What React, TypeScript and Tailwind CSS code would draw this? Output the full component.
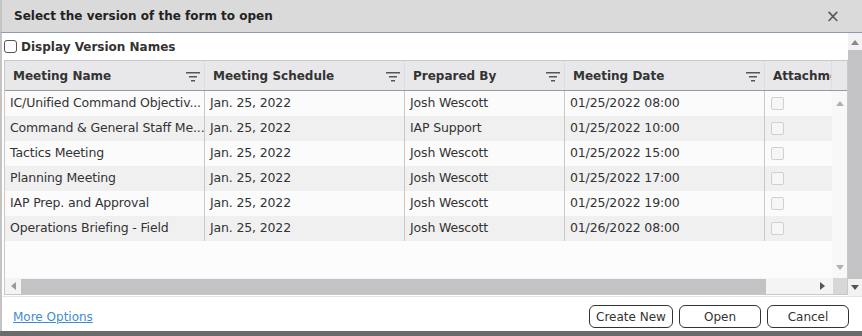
import React from "react";

const rows = [
  ["IC/Unified Command Objectiv...", "Jan. 25, 2022", "Josh Wescott", "01/25/2022 08:00"],
  ["Command & General Staff Me...", "Jan. 25, 2022", "IAP Support", "01/25/2022 10:00"],
  ["Tactics Meeting", "Jan. 25, 2022", "Josh Wescott", "01/25/2022 15:00"],
  ["Planning Meeting", "Jan. 25, 2022", "Josh Wescott", "01/25/2022 17:00"],
  ["IAP Prep. and Approval", "Jan. 25, 2022", "Josh Wescott", "01/25/2022 19:00"],
  ["Operations Briefing - Field", "Jan. 25, 2022", "Josh Wescott", "01/26/2022 08:00"],
];

const columns = [
  { label: "Meeting Name", w: "w-[200px]" },
  { label: "Meeting Schedule", w: "w-[200px]" },
  { label: "Prepared By", w: "w-[160px]" },
  { label: "Meeting Date", w: "w-[200px]" },
];

function FilterIcon() {
  return (
    <svg width="14" height="12" viewBox="0 0 14 12" className="shrink-0">
      <rect x="0" y="2" width="14" height="1.5" fill="#555" />
      <rect x="3" y="6" width="8" height="1.5" fill="#555" />
      <rect x="5" y="10" width="4" height="1.5" fill="#555" />
    </svg>
  );
}

function Arrow({ dir, color = "#999" }: { dir: "up" | "down" | "left" | "right"; color?: string }) {
  const pts = {
    up: "0,5 4,0 8,5",
    down: "0,0 4,5 8,0",
    left: "5,0 0,4 5,8",
    right: "0,0 5,4 0,8",
  }[dir];
  const vert = dir === "up" || dir === "down";
  return (
    <svg width={vert ? 8 : 5} height={vert ? 5 : 8} viewBox={vert ? "0 0 8 5" : "0 0 5 8"}>
      <polygon points={pts} fill={color} />
    </svg>
  );
}

export default function App() {
  return (
    <div
      className="w-[862px] h-[336px] flex flex-col bg-white text-[#333] overflow-hidden"
      style={{ fontFamily: "'DejaVu Sans', Verdana, sans-serif" }}
    >
      {/* title bar */}
      <div className="h-[33px] shrink-0 flex items-center justify-between bg-[#dadada] border-b border-[#8e9aae] border-l-2 border-l-[#c4c4c4] pl-[12px] pr-[22px]">
        <span className="text-[12px] font-bold text-[#222]">Select the version of the form to open</span>
        <span className="text-[17px] leading-none text-[#555]">×</span>
      </div>

      {/* body */}
      <div className="flex-1 flex flex-col border-l-2 border-[#c4c4c4]">
        <div className="flex h-[263px] shrink-0">
          <div className="flex-1 flex flex-col pl-[2px]">
            <label className="h-[27px] flex items-center gap-[4px] text-[12px] font-bold text-[#333]">
              <span className="w-[13px] h-[13px] border border-[#555] rounded-[3px] bg-white" />
              Display Version Names
            </label>
            {/* grid */}
            <div className="flex-1 flex flex-col border border-[#c8c8c8] bg-[#fcfcfc] mb-[1px]">
              <div className="h-[30px] flex bg-[#e8e8ea] border-b border-[#9a9a9a] overflow-hidden">
                {columns.map((c) => (
                  <div
                    key={c.label}
                    className={`${c.w} shrink-0 flex items-center justify-between pl-[8px] pr-[4px] border-r border-dotted border-[#d4d4d4] text-[12px] font-bold text-[#333]`}
                  >
                    <span>{c.label}</span>
                    <FilterIcon />
                  </div>
                ))}
                <div className="w-[67px] shrink-0 flex items-center pl-[8px] overflow-hidden whitespace-nowrap text-[12px] font-bold text-[#333] border-r border-dotted border-[#d4d4d4]">
                  Attachments
                </div>
              </div>
              <div className="flex-1 flex min-h-0">
                <div className="flex-1 overflow-hidden">
                  {rows.map((r, i) => (
                    <div key={i} className={`h-[25px] flex ${i % 2 === 0 ? "bg-[#fbfbfc]" : "bg-[#f0f0f1]"}`}>
                      {r.map((cell, j) => (
                        <div
                          key={j}
                          className={`${columns[j].w} shrink-0 flex items-center pl-[5px] border-r border-[#c8c8c8] text-[12.5px] tracking-[-0.15px] text-[#333] whitespace-nowrap overflow-hidden`}
                        >
                          {cell}
                        </div>
                      ))}
                      <div className="w-[67px] shrink-0 flex items-center pl-[6px]">
                        <span className="w-[13px] h-[13px] border border-[#d0d0d0] rounded-[2px] bg-[#f6f6f6]" />
                      </div>
                    </div>
                  ))}
                </div>
                <div className="w-[15px] shrink-0 flex flex-col items-center justify-between pt-[10px] pb-[8px] bg-[#f8f8f8]">
                  <Arrow dir="up" color="#b0b0b0" />
                  <Arrow dir="down" color="#b0b0b0" />
                </div>
              </div>
              <div className="h-[16px] shrink-0 flex items-center bg-[#f4f4f4]">
                <div className="w-[16px] flex justify-center">
                  <Arrow dir="left" color="#999" />
                </div>
                <div className="w-[745px] h-[15px] bg-[#c3c2c5]" />
                <div className="flex-1 flex justify-end pr-[8px]">
                  <Arrow dir="right" color="#555" />
                </div>
                <div className="w-[14px] h-[16px] bg-[#d6d8d6]" />
              </div>
            </div>
          </div>
          {/* outer scrollbar */}
          <div className="w-[14px] shrink-0 flex flex-col items-center bg-[#f2f2f2] pt-[7px] pb-[6px]">
            <Arrow dir="up" color="#888" />
            <div className="w-full flex-1 bg-[#c3c2c5] mt-[5px] mb-[6px]" />
            <Arrow dir="down" color="#555" />
          </div>
        </div>

        {/* footer */}
        <div className="flex-1 flex items-start justify-between pt-[8px] pl-[11px] pr-[13px] border-t border-[#e4e4e4]">
          <a className="mt-[3px] text-[12px] text-[#3f8bd6] underline">More Options</a>
          <div className="flex gap-[6px]">
            <button className="w-[84px] h-[23px] border border-[#333] rounded-[6px] bg-white text-[12px] text-[#333]">
              Create New
            </button>
            <button className="w-[82px] h-[23px] border border-[#333] rounded-[6px] bg-white text-[12px] text-[#333]">
              Open
            </button>
            <button className="w-[82px] h-[23px] border border-[#333] rounded-[6px] bg-white text-[12px] text-[#333]">
              Cancel
            </button>
          </div>
        </div>
      </div>
      <div className="h-[5px] shrink-0 bg-[#6b6b6b]" />
    </div>
  );
}
